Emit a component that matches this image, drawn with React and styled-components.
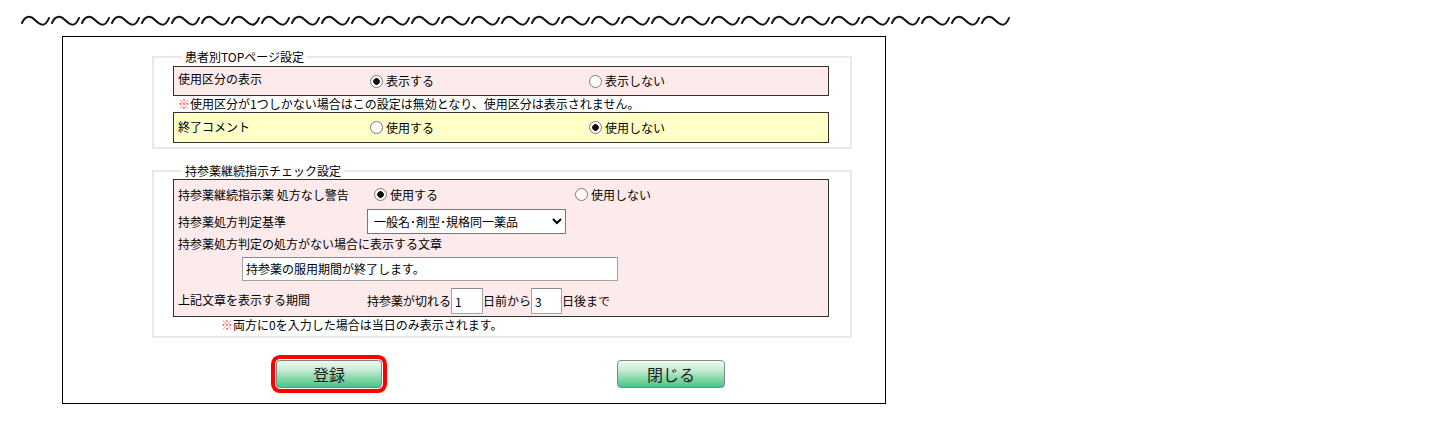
import React from 'react'
import styled, { createGlobalStyle } from 'styled-components'

const GlobalStyle = createGlobalStyle`
body {
    margin: 0;
    background: #fff;
    font-family: "Noto Sans CJK JP", "Liberation Sans", sans-serif;
    font-size: 12px;
    color: #000;
}
`

const Page = styled.div`
width: 1441px;
height: 432px;
overflow: hidden;
`

const WaveBar = styled.div`
height: 36px;
padding: 13px 0 0 21px;
box-sizing: border-box;

svg {
    display: block;
}
`

const Frame = styled.div`
margin-left: 62px;
width: 824px;
height: 368px;
box-sizing: border-box;
border: 1px solid #000;
`

const Group = styled.fieldset`
margin: ${p => p.top}px 0 0 89px;
width: 700px;
box-sizing: border-box;
border: 2px solid #e9e9e9;
padding: ${p => p.pt}px 21px ${p => p.pb}px 19px;
`

const Legend = styled.legend`
margin-left: 9px;
padding: 0 3px;
line-height: 14px;
font-size: 12px;
`

const OptionRow = styled.div`
display: grid;
grid-template-columns: 192px 219px 1fr;
align-items: center;
height: ${p => p.h}px;
box-sizing: border-box;
padding-left: 4px;
border: 1px solid #333;
background: ${p => p.bg};

& > span {
    margin-top: ${p => p.lift ? -p.lift : 0}px;
}
`

const Note = styled.div`
height: 16px;
line-height: 16px;
padding-left: ${p => p.indent}px;

b {
    font-weight: normal;
    color: #ff4a4a;
}
`

const Choice = styled.label`
display: inline-flex;
align-items: center;
gap: 3px;
line-height: 14px;
`

const Radio = styled.input.attrs({ type: 'radio' })`
appearance: none;
margin: 0;
width: 13px;
height: 13px;
border-radius: 50%;
border: 1px solid #7a7a7a;
box-sizing: border-box;
background: #fff;

&:checked {
    background: radial-gradient(circle, #111 0 3px, #fff 3.6px);
}
`

const CheckBox = styled.div`
height: 138px;
box-sizing: border-box;
border: 1px solid #333;
background: #fdebeb;
display: flex;
flex-direction: column;
`

const Line = styled.div`
display: grid;
grid-template-columns: ${p => p.cols || 'auto'};
align-items: center;
height: ${p => p.h}px;
padding-left: 4px;
line-height: 14px;
`

const Select = styled.select`
width: 199px;
height: 25px;
font-family: inherit;
font-size: 12px;
border: 1px solid #767676;
background: #fff;
padding: 0 2px;
color: #000;
`

const TextBox = styled.input.attrs({ type: 'text' })`
width: ${p => p.w}px;
height: ${p => p.hgt}px;
box-sizing: border-box;
margin: ${p => p.m || '0'};
border: 1px solid #a3a3a3;
border-top-color: #8a8a8a;
font-family: inherit;
font-size: 12px;
padding: 0 3px;
color: #000;
`

const Period = styled.div`
display: flex;
align-items: center;
padding-top: 3px;
`

const ButtonBar = styled.div`
display: flex;
gap: 235px;
padding: 22px 0 0 213px;
`

const GreenButton = styled.button`
width: ${p => p.w}px;
height: 28px;
border: 1px solid #7b8a80;
border-radius: 4px;
background: linear-gradient(#eef9f1 0%, #c6ecd3 35%, #7fd6a3 70%, #4cc487 100%);
font-family: inherit;
font-size: 16px;
color: #222;
padding: 0;
box-shadow: ${p => p.marked ? '0 0 0 1px #fff, 0 0 0 5px #f00' : 'inset 0 1px 0 #fff'};
`

function Wave() {
    const parts = []
    for (let i = 0; i < 33; i++) {
        const x = i * 30 + 1
        parts.push(`M${x} 10 C${x + 3} 3 ${x + 8} 2 ${x + 13} 7 S${x + 23} 15 ${x + 27} 5`)
    }
    return (
        <svg width="1000" height="18" viewBox="0 0 1000 18">
            <path d={parts.join(' ')} fill="none" stroke="#111" strokeWidth="2" strokeLinecap="round" />
        </svg>
    )
}

function App() {
    return (
        <Page>
            <GlobalStyle />
            <WaveBar>
                <Wave />
            </WaveBar>
            <Frame>
                <Group top={13} pt={2} pb={4}>
                    <Legend>患者別TOPページ設定</Legend>
                    <OptionRow h={30} bg="#fdebeb" lift={5}>
                        <span>使用区分の表示</span>
                        <Choice><Radio name="kubun" defaultChecked />表示する</Choice>
                        <Choice><Radio name="kubun" />表示しない</Choice>
                    </OptionRow>
                    <Note indent={5}><b>※</b>使用区分が1つしかない場合はこの設定は無効となり、使用区分は表示されません。</Note>
                    <OptionRow h={31} bg="#ffffc8" lift={2}>
                        <span>終了コメント</span>
                        <Choice><Radio name="comment" />使用する</Choice>
                        <Choice><Radio name="comment" defaultChecked />使用しない</Choice>
                    </OptionRow>
                </Group>
                <Group top={15} pt={1} pb={3}>
                    <Legend>持参薬継続指示チェック設定</Legend>
                    <CheckBox>
                        <Line h={29} cols="196px 201px 1fr">
                            <span>持参薬継続指示薬 処方なし警告</span>
                            <Choice><Radio name="warn" defaultChecked />使用する</Choice>
                            <Choice><Radio name="warn" />使用しない</Choice>
                        </Line>
                        <Line h={25} cols="189px 1fr">
                            <span>持参薬処方判定基準</span>
                            <Select defaultValue="a">
                                <option value="a">一般名･剤型･規格同一薬品</option>
                            </Select>
                        </Line>
                        <Line h={19}>
                            <span>持参薬処方判定の処方がない場合に表示する文章</span>
                        </Line>
                        <Line h={31}>
                            <TextBox w={376} hgt={24} m="0 0 0 64px" defaultValue="持参薬の服用期間が終了します。" />
                        </Line>
                        <Line h={31} cols="189px 1fr">
                            <span>上記文章を表示する期間</span>
                            <Period>
                                持参薬が切れる
                                <TextBox w={32} hgt={26} defaultValue="1" />
                                日前から
                                <TextBox w={31} hgt={26} defaultValue="3" />
                                日後まで
                            </Period>
                        </Line>
                    </CheckBox>
                    <Note indent={48}><b>※</b>両方に0を入力した場合は当日のみ表示されます。</Note>
                </Group>
                <ButtonBar>
                    <GreenButton w={106} marked>登録</GreenButton>
                    <GreenButton w={108}>閉じる</GreenButton>
                </ButtonBar>
            </Frame>
        </Page>
    )
}

export default App
